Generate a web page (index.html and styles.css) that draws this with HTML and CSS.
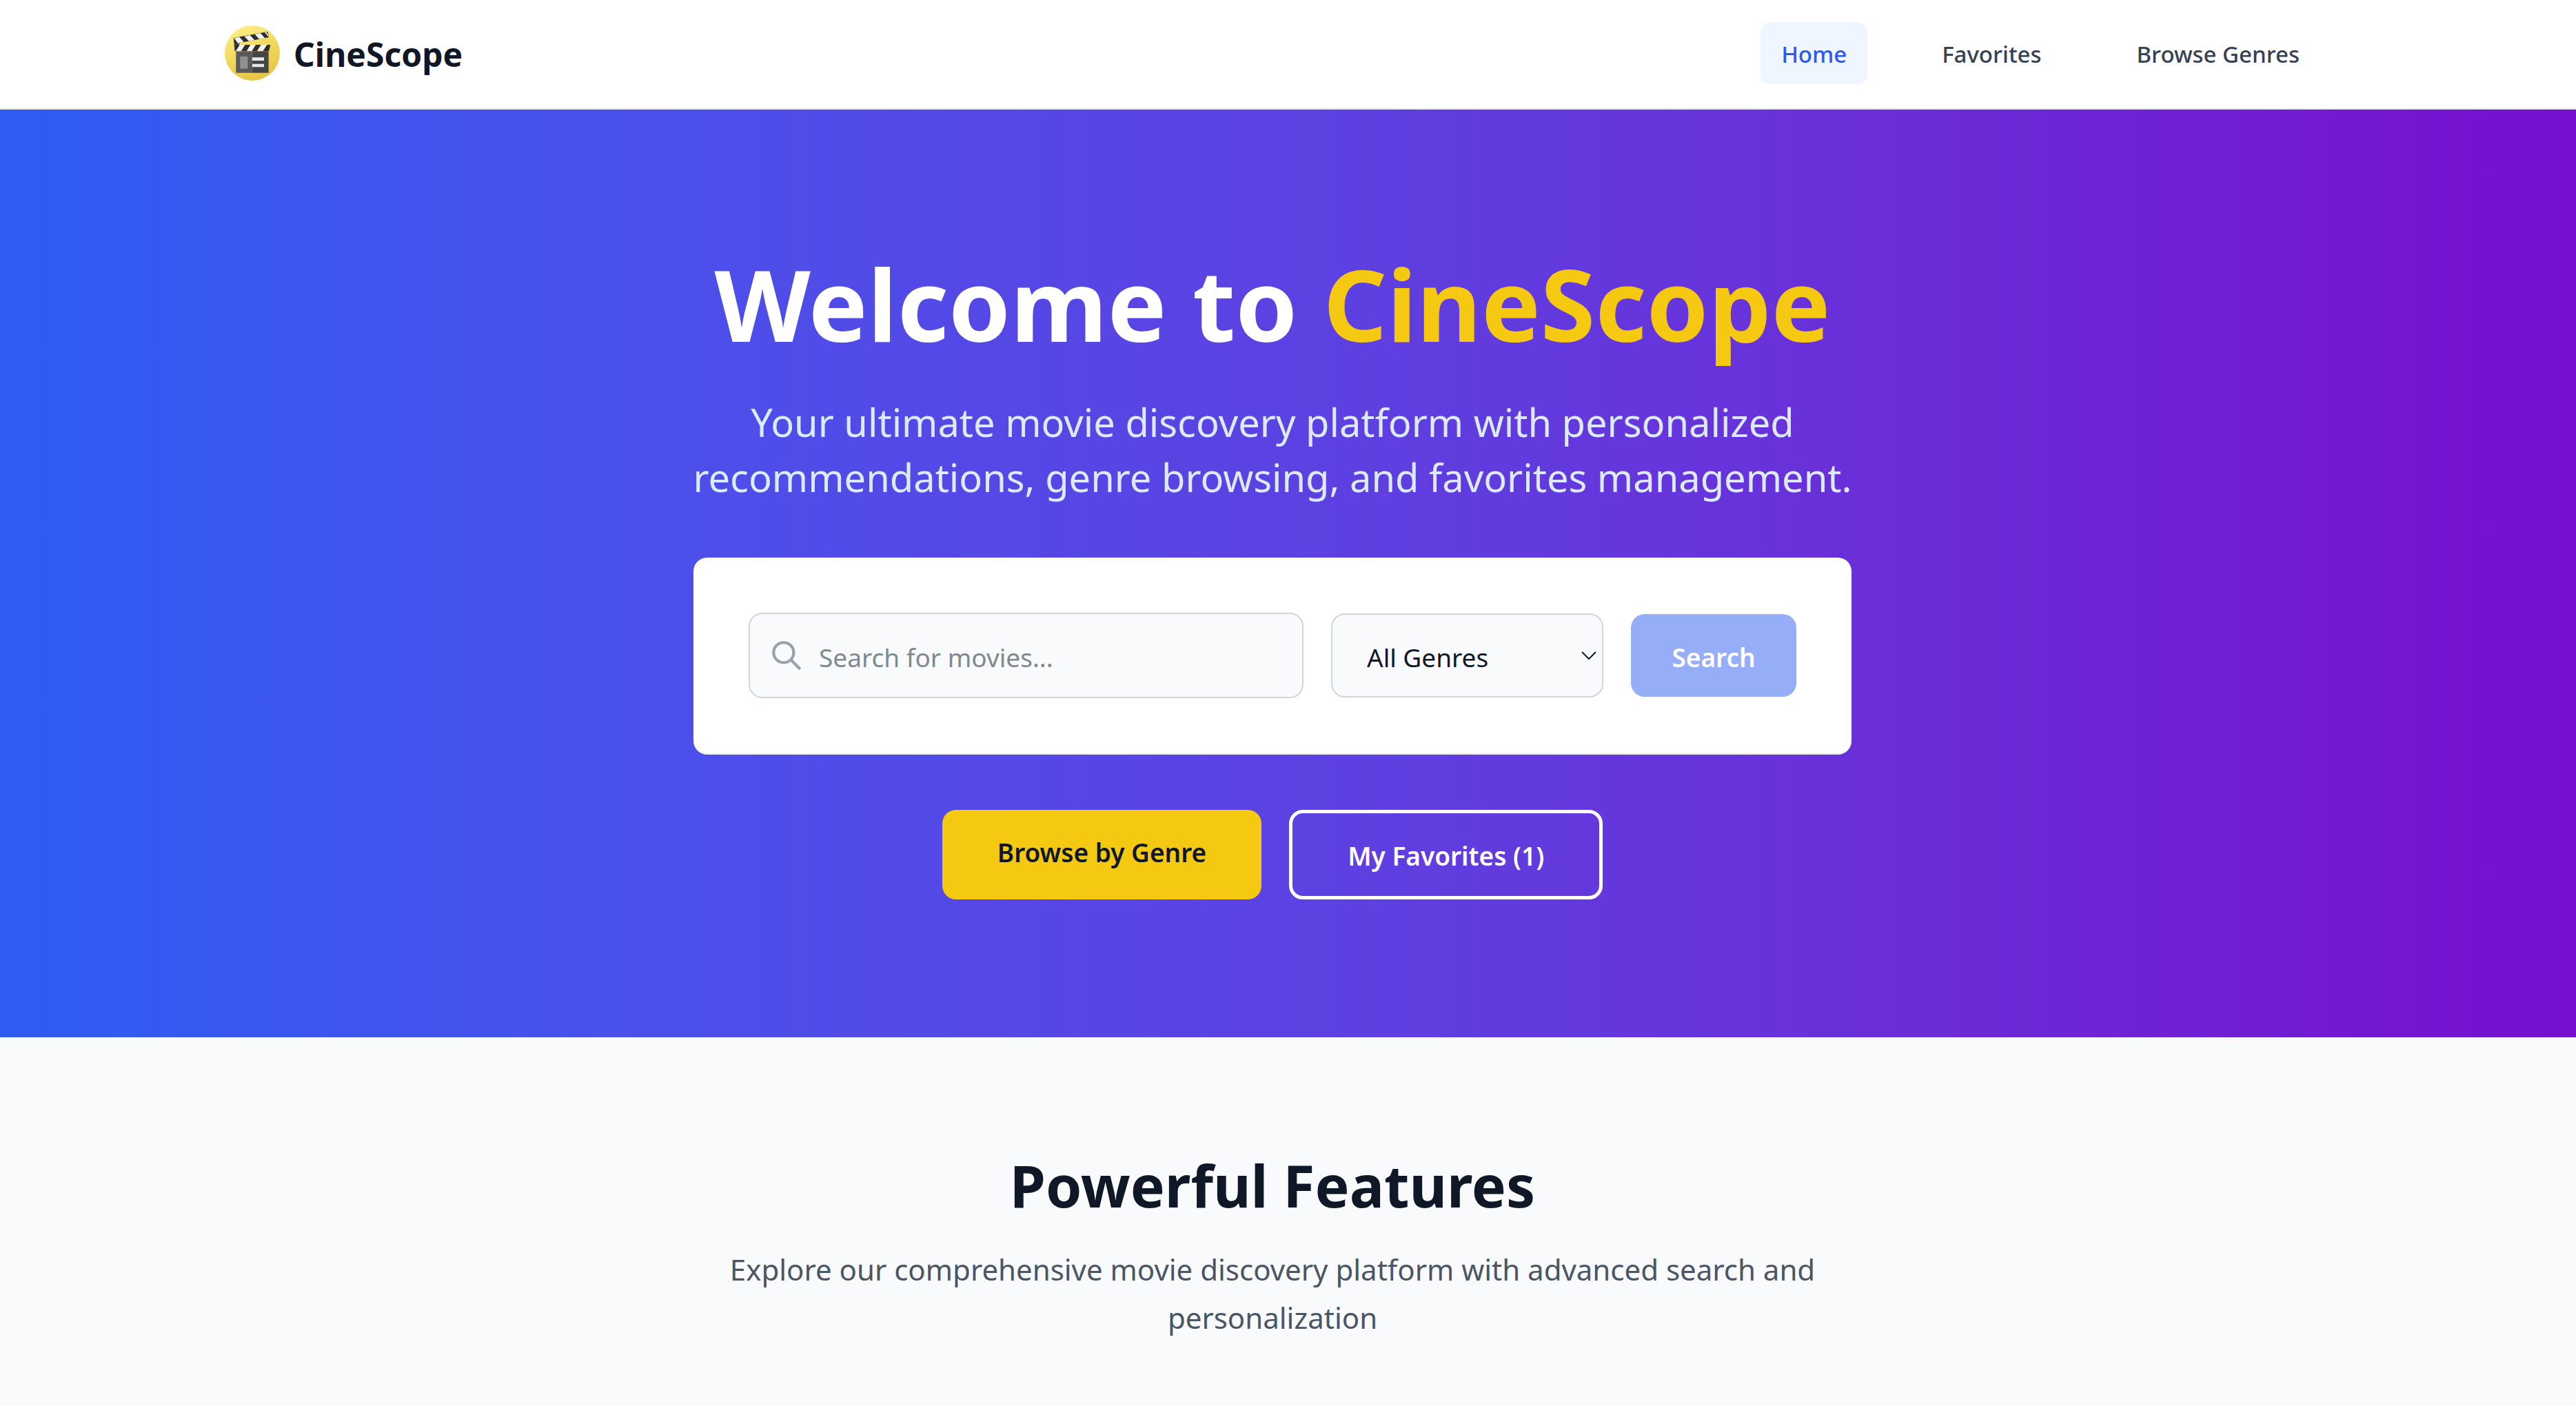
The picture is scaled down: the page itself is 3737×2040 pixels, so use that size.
FILE: index.html
```html
<!DOCTYPE html>
<html lang="en">
<head>
  <meta charset="utf-8">
  <meta name="viewport" content="width=device-width, initial-scale=1">
  <title>CineScope</title>
  <link rel="stylesheet" href="styles.css">
</head>
<body>
  <header class="site-header">
    <div class="header-inner">
      <a class="brand" href="#">
        <svg class="brand-logo" viewBox="12 12 240 240" aria-hidden="true">
          <defs>
            <linearGradient id="disc" x1="0.3" y1="0" x2="0.7" y2="1">
              <stop offset="0" stop-color="#fdee83"/>
              <stop offset="0.5" stop-color="#f1d75c"/>
              <stop offset="1" stop-color="#e4c344"/>
            </linearGradient>
            <clipPath id="top-bar"><path d="M50 66 199 39 205 63 55 92Z"/></clipPath>
            <clipPath id="low-bar"><path d="M55 96H211L204 124H60Z"/></clipPath>
          </defs>
          <circle cx="132" cy="132" r="120" fill="url(#disc)"/>
          <path d="M51 68 78 88 60 124H55Z" fill="#4c4c4c"/>
          <g clip-path="url(#top-bar)">
            <path d="M45 30H215V100H45Z" fill="#2e2e2e"/>
            <path d="M52 67 76 62 97 86 72 92ZM97 59 122 54 144 78 119 82ZM143 50 167 45 189 69 165 74ZM186 42 193 40 208 62 205 64Z" fill="#f2f2f2"/>
          </g>
          <g clip-path="url(#low-bar)">
            <path d="M50 92H215V126H50Z" fill="#2e2e2e"/>
            <path d="M77 96H101L83 124H60ZM124 96H147L130 124H107ZM170 96H196L178 124H152Z" fill="#f2f2f2"/>
          </g>
          <path d="M61 124H131V218H61Z" fill="#595959"/>
          <path d="M131 124H203V218H131Z" fill="#454545"/>
          <path d="M79 147H112V200H79Z" fill="#909090"/>
          <path d="M132 151H183V165H132ZM132 179H183V193H132Z" fill="#e6e6e6"/>
        </svg>
        <span class="brand-name">CineScope</span>
      </a>
      <nav class="site-nav" aria-label="Main">
        <a class="nav-link nav-link-active" href="#" aria-current="page">Home</a>
        <a class="nav-link" href="#">Favorites</a>
        <a class="nav-link" href="#">Browse Genres</a>
      </nav>
    </div>
  </header>
  <main>
    <section class="hero">
      <div class="hero-inner">
        <h1 class="hero-title">Welcome to <span class="accent">CineScope</span></h1>
        <p class="hero-text">Your ultimate movie discovery platform with personalized recommendations, genre browsing, and favorites management.</p>
        <form class="search-card">
          <div class="search-field">
            <svg class="search-icon" viewBox="0 0 24 24" aria-hidden="true">
              <path d="M21 21l-6-6m2-5a7 7 0 11-14 0 7 7 0 0114 0z" fill="none" stroke="currentColor" stroke-width="2" stroke-linecap="round" stroke-linejoin="round"/>
            </svg>
            <input class="search-input" type="text" placeholder="Search for movies..." aria-label="Search for movies">
          </div>
          <div class="genre-field">
            <select class="genre-select" aria-label="Genre">
              <option>All Genres</option>
            </select>
            <svg class="genre-chevron" viewBox="0 0 22 12" aria-hidden="true">
              <path d="M1 1 11 11 21 1" fill="none" stroke="currentColor" stroke-width="2"/>
            </svg>
          </div>
          <button class="search-button" type="submit" disabled>Search</button>
        </form>
        <div class="hero-actions">
          <a class="action action-primary" href="#">Browse by Genre</a>
          <a class="action action-outline" href="#">My Favorites (1)</a>
        </div>
      </div>
    </section>
    <section class="features">
      <h2 class="features-title">Powerful Features</h2>
      <p class="features-text">Explore our comprehensive movie discovery platform with advanced search and personalization</p>
    </section>
  </main>
</body>
</html>
```
FILE: styles.css
```css
:root {
  --gutter: 45px;
  --ink: #101828;
  --line: #d1d5dc;
  --surface: #f9fafb;
}

* {
  box-sizing: border-box;
}

body {
  margin: 0;
  min-height: 100vh;
  background: var(--surface);
  color: var(--ink);
  font-family: "Noto Sans", "Open Sans", sans-serif;
}

a {
  color: inherit;
  text-decoration: none;
}

h1, h2, p {
  margin: 0;
}

/* Header */
.site-header {
  padding: 32px var(--gutter) 35px 0;
  background: #fff;
  border-bottom: 2px solid #e5e7eb;
}

.header-inner {
  display: flex;
  align-items: center;
  justify-content: space-between;
  max-width: 3040px;
  margin: 0 auto;
}

.brand {
  display: flex;
  align-items: center;
  gap: 20px;
}

.brand-logo {
  width: 80px;
  height: 80px;
}

.brand-name {
  padding-top: 4px;
  font-size: 48px;
  font-weight: 700;
  line-height: 76px;
}

.site-nav {
  display: flex;
  gap: 78px;
}

.nav-link {
  padding: 22px 30px 18px;
  border-radius: 15px;
  color: #364153;
  font-size: 33px;
  font-weight: 500;
  line-height: 50px;
}

.nav-link-active {
  background: #eff6ff;
  color: #2b59f5;
}

/* Hero */
.hero {
  padding: 200px var(--gutter) 200px 0;
  background: linear-gradient(to right, #2e5cf2, #4c4fea 26%, #5c42e2 50%, #6a2fd8 72%, #760fce);
}

.hero-inner {
  max-width: 1680px;
  margin: 0 auto;
  text-align: center;
}

.hero-title {
  margin-bottom: 51px;
  color: #fff;
  font-size: 144px;
  font-weight: 700;
  line-height: 162px;
}

.accent {
  color: #f5c911;
}

.hero-text {
  margin: 0 -10px 77px;
  color: #dbeafe;
  font-size: 56px;
  line-height: 80px;
}

.search-card {
  display: flex;
  align-items: center;
  gap: 40px;
  margin-bottom: 80px;
  padding: 80px;
  background: #fff;
  border-bottom: 2px solid #e5e7eb;
  border-radius: 20px;
}

.search-field {
  position: relative;
  flex: 1;
}

.search-icon {
  position: absolute;
  top: 37px;
  left: 30px;
  width: 50px;
  height: 50px;
  color: #99a1af;
}

.search-input {
  display: block;
  width: 100%;
  height: 124px;
  padding: 4px 30px 0 100px;
  border: 2px solid var(--line);
  border-radius: 20px;
  background: var(--surface);
  color: var(--ink);
  font: 400 37px "Noto Sans", "Open Sans", sans-serif;
}

.search-input::placeholder {
  color: #808890;
  opacity: 1;
}

.genre-field {
  position: relative;
  flex: 0 0 395px;
}

.genre-select {
  display: block;
  width: 100%;
  height: 122px;
  padding: 4px 50px 0;
  border: 2px solid var(--line);
  border-radius: 20px;
  background: var(--surface);
  color: var(--ink);
  font: 400 37px "Noto Sans", "Open Sans", sans-serif;
  appearance: none;
}

.genre-chevron {
  position: absolute;
  top: 55px;
  right: 10px;
  width: 22px;
  height: 12px;
  pointer-events: none;
}

.search-button {
  flex: 0 0 240px;
  height: 120px;
  padding: 4px 0 0;
  border: 0;
  border-radius: 20px;
  background: #96adf8;
  color: #fff;
  font: 600 37px "Noto Sans", "Open Sans", sans-serif;
}

.hero-actions {
  display: flex;
  justify-content: center;
  gap: 40px;
}

.action {
  padding: 32px 80px 28px;
  border-radius: 20px;
  font-size: 37px;
  font-weight: 600;
  line-height: 60px;
}

.action-primary {
  background: #f5c911;
}

.action-outline {
  border: 5px solid #fff;
  color: #fff;
}

/* Features */
.features {
  padding: 160px var(--gutter) 40px 0;
  text-align: center;
}

.features-title {
  margin-bottom: 33px;
  font-size: 84px;
  font-weight: 700;
  line-height: 109px;
}

.features-text {
  max-width: 1680px;
  margin: 0 auto;
  color: #4a5565;
  font-size: 42px;
  line-height: 70px;
}
```
